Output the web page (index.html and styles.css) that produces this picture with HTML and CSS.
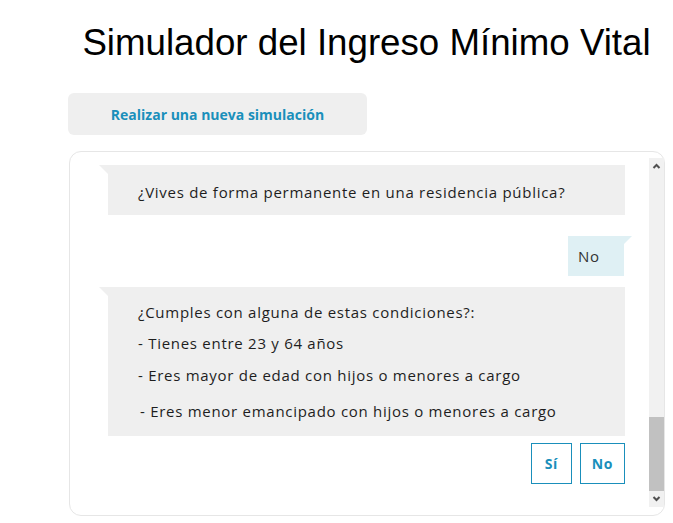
FILE: index.html
```html
<!DOCTYPE html>
<html lang="es">
<head>
  <meta charset="UTF-8" />
  <meta name="viewport" content="width=device-width, initial-scale=1.0"/>
  <title>Simulador del Ingreso Mínimo Vital</title>
  <link rel="stylesheet" href="styles.css">
</head>
<body>
  <main class="page">
    <h1 class="title">Simulador del Ingreso Mínimo Vital</h1>
    <button class="restart">Realizar una nueva simulación</button>
    <section class="chat">
      <div class="chat-messages">
        <div class="message bot-message single">¿Vives de forma permanente en una residencia pública?</div>
        <div class="message user-message">No</div>
        <div class="message bot-message list">
          <p>¿Cumples con alguna de estas condiciones?:</p>
          <p>- Tienes entre 23 y 64 años</p>
          <p>- Eres mayor de edad con hijos o menores a cargo</p>
          <p class="indent">- Eres menor emancipado con hijos o menores a cargo</p>
        </div>
        <div class="answers">
          <button class="answer">Sí</button>
          <button class="answer">No</button>
        </div>
      </div>
      <div class="scrollbar">
        <span class="scroll-btn">
          <svg width="15" height="16" viewBox="0 0 15 16"><polyline points="4.5,10 7.5,7 10.5,10" fill="none" stroke="#505050" stroke-width="2"/></svg>
        </span>
        <span class="scroll-track"><span class="scroll-thumb"></span></span>
        <span class="scroll-btn">
          <svg width="15" height="16" viewBox="0 0 15 16"><polyline points="4.5,6 7.5,9 10.5,6" fill="none" stroke="#505050" stroke-width="2"/></svg>
        </span>
      </div>
    </section>
  </main>
</body>
</html>
```

FILE: styles.css
```css
:root {
  --blue: #1a8fbb;
  --bubble: #efefef;
  --bubble-user: #dff0f4;
  --text: #1e1e1e;
}
* { box-sizing: border-box; margin: 0; padding: 0; }
body {
  font-family: 'Open Sans', sans-serif;
  background: #fff;
  color: var(--text);
}
.page {
  width: 597px;
  margin-left: 68px;
  padding-top: 22px;
}
.title {
  font: 400 36.7px/42px 'Liberation Sans', Arial, sans-serif;
  color: #000;
  text-align: center;
}
.restart {
  display: block;
  width: 299px;
  height: 42px;
  margin-top: 29px;
  border: none;
  border-radius: 6px;
  background: var(--bubble);
  color: var(--blue);
  font: 700 14px 'Open Sans', sans-serif;
  cursor: pointer;
}
.chat {
  display: flex;
  width: 596px;
  height: 365px;
  margin: 16px 0 0 1px;
  padding: 6px 0 8px;
  border: 1px solid #e6e6e6;
  border-radius: 12px;
}
.chat-messages {
  flex: 1;
  display: flex;
  flex-direction: column;
  padding: 7px 24px 0 38px;
  overflow: hidden;
}
.message {
  position: relative;
  font-size: 15px;
  line-height: 22px;
  letter-spacing: 0.72px;
}
.bot-message {
  background: var(--bubble);
  padding: 16px 30px 12px;
}
.bot-message::before {
  content: '';
  position: absolute;
  top: 0;
  left: -9px;
  border-top: 9px solid var(--bubble);
  border-left: 9px solid transparent;
}
.user-message {
  align-self: flex-end;
  width: 56px;
  margin: 21px 1px 0 0;
  padding: 9px 10px;
  background: var(--bubble-user);
  color: #333;
}
.user-message::after {
  content: '';
  position: absolute;
  top: 0;
  right: -8px;
  border-top: 8px solid var(--bubble-user);
  border-right: 8px solid transparent;
}
.list {
  margin-top: 11px;
  padding: 14px 30px 14px;
}
.list p + p { margin-top: 9px; }
.list p:nth-child(3) { margin-top: 10px; }
.list p:nth-child(4) { margin-top: 14px; }
.list .indent { padding-left: 2px; }
.answers {
  display: flex;
  justify-content: flex-end;
  gap: 8px;
  margin-top: 7px;
}
.answer {
  min-width: 41px;
  height: 41px;
  padding: 0 11px;
  border: 1px solid var(--blue);
  background: #fff;
  color: var(--blue);
  font: 700 14px 'Open Sans', sans-serif;
  letter-spacing: 0.6px;
  cursor: pointer;
}
.scrollbar {
  display: flex;
  flex-direction: column;
  width: 15px;
  background: #f1f1f1;
}
.scroll-btn { display: block; height: 16px; }
.scroll-btn svg { display: block; }
.scroll-track {
  flex: 1;
  display: flex;
  flex-direction: column;
  justify-content: flex-end;
}
.scroll-thumb {
  height: 74px;
  background: #c1c1c1;
}
```
